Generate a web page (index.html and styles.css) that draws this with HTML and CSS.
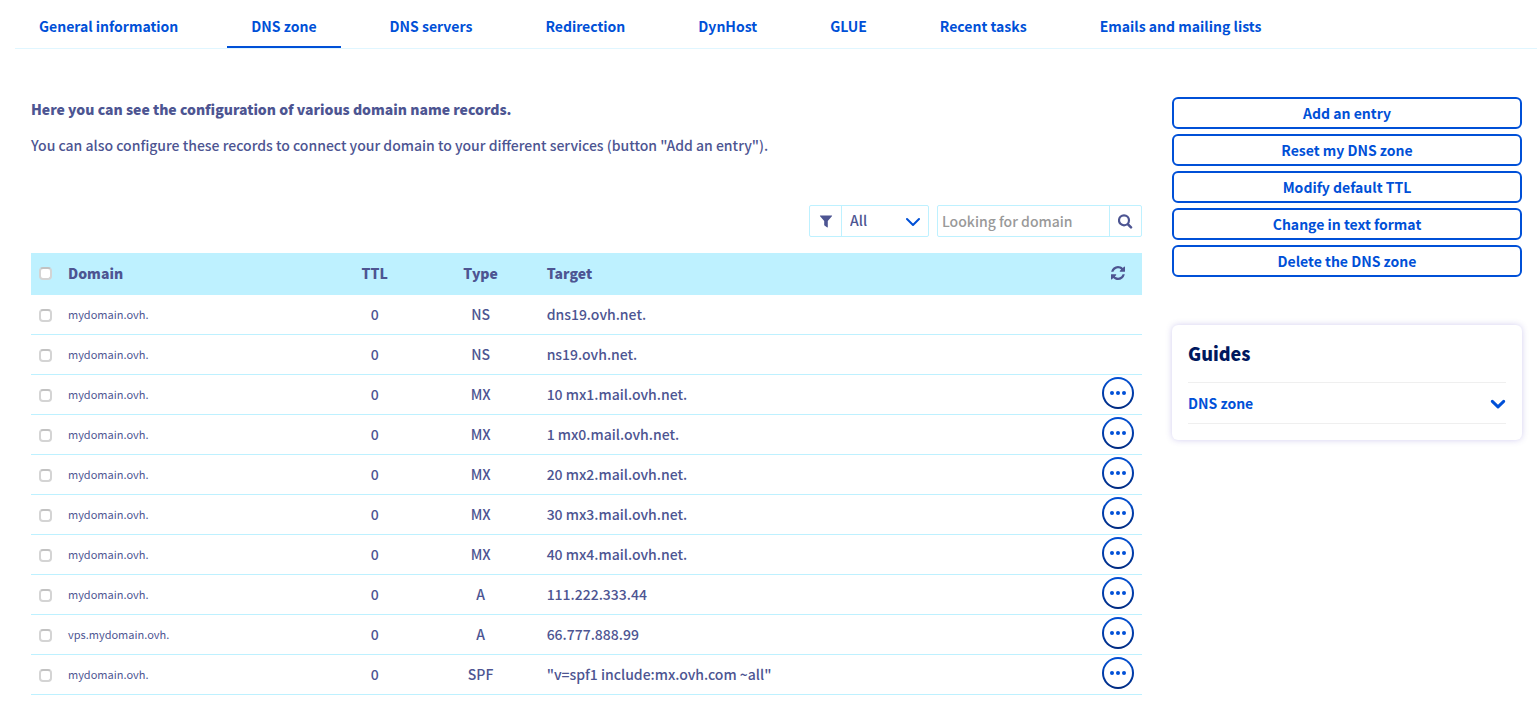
FILE: index.html
```html
<!DOCTYPE html>
<html lang="en">
<head>
<meta charset="utf-8">
<title>DNS zone</title>
<meta name="viewport" content="width=device-width, initial-scale=1">
<link rel="stylesheet" href="styles.css">
</head>
<body>
<nav class="tabs" aria-label="Domain sections">
  <a class="tab" href="#general">General information</a>
  <a class="tab tab-active" href="#zone" aria-current="page">DNS zone</a>
  <a class="tab" href="#servers">DNS servers</a>
  <a class="tab" href="#redirection">Redirection</a>
  <a class="tab" href="#dynhost">DynHost</a>
  <a class="tab" href="#glue">GLUE</a>
  <a class="tab" href="#tasks">Recent tasks</a>
  <a class="tab" href="#emails">Emails and mailing lists</a>
</nav>

<div class="layout">
  <main class="content">
    <p class="intro intro-strong">Here you can see the configuration of various domain name records.</p>
    <p class="intro">You can also configure these records to connect your domain to your different services (button "Add an entry").</p>

    <form class="filters">
      <div class="group">
        <label class="addon" for="type" aria-label="Filter by type">
          <svg width="14" height="14" viewBox="0 0 14 14" aria-hidden="true"><path fill="currentColor" d="M1.400 1.500h11.200c.5 0 .6.500.3.800L8.800 6.900V12.900c0 .5-.5.7-.9.400L5.500 11.500c-.2-.1-.3-.3-.3-.5V6.900L1.100 2.300c-.3-.3-.2-.8.300-.8z"/></svg>
        </label>
        <div class="picker">
          <select class="select" id="type"><option>All</option><option>A</option><option>MX</option><option>NS</option><option>SPF</option></select>
          <svg class="picker-arrow" width="14" height="10" viewBox="0 0 14 10" aria-hidden="true"><path fill="none" stroke="currentColor" stroke-width="2" stroke-linecap="round" stroke-linejoin="round" d="M1 2l6 6 6-6"/></svg>
        </div>
      </div>
      <div class="group">
        <input class="search" type="text" placeholder="Looking for domain" aria-label="Looking for domain">
        <button class="addon addon-end" type="button" aria-label="Search">
          <svg width="16" height="16" viewBox="0 0 16 16" aria-hidden="true"><circle cx="6" cy="7.300" r="5" fill="none" stroke="currentColor" stroke-width="2.200"/><path fill="none" stroke="currentColor" stroke-width="2.600" stroke-linecap="round" d="M10 11.300l3 3"/></svg>
        </button>
      </div>
    </form>

    <table class="records">
      <colgroup><col class="col-check"><col class="col-domain"><col class="col-ttl"><col class="col-type"><col><col class="col-action"></colgroup>
      <thead>
        <tr>
          <th><input class="check" type="checkbox" aria-label="Select all records"></th>
          <th>Domain</th><th class="center">TTL</th><th class="center">Type</th><th>Target</th>
          <th class="center"><button class="refresh" type="button" aria-label="Refresh"><svg width="14" height="14" viewBox="0 0 1536 1536" aria-hidden="true"><path fill="currentColor" d="M1511 928q0 5-1 7-64 268-268 434.500T764 1536q-146 0-282.500-55T238 1324l-129 129q-19 19-45 19t-45-19-19-45V960q0-26 19-45t45-19h448q26 0 45 19t19 45-19 45l-137 137q71 66 161 102t187 36q134 0 250-65t186-179q11-17 53-117 8-23 30-23h192q13 0 22.500 9.500t9.500 22.500zm25-800v448q0 26-19 45t-45 19h-448q-26 0-45-19t-19-45 19-45l138-138Q969 256 768 256q-134 0-250 65T332 500q-11 17-53 117-8 23-30 23H50q-13 0-22.500-9.500T18 608v-7q65-268 270-434.500T768 0q146 0 284 55.500T1297 212l130-129q19-19 45-19t45 19 19 45z"/></svg></button></th>
        </tr>
      </thead>
      <tbody id="rows">
      </tbody>
    </table>
  </main>

  <aside class="side">
    <div class="actions">
      <button class="action" type="button">Add an entry</button>
      <button class="action" type="button">Reset my DNS zone</button>
      <button class="action" type="button">Modify default TTL</button>
      <button class="action" type="button">Change in text format</button>
      <button class="action" type="button">Delete the DNS zone</button>
    </div>
    <section class="guides">
      <h2 class="guides-title">Guides</h2>
      <button class="guide" type="button" aria-expanded="false">
        <span>DNS zone</span>
        <svg width="16" height="12" viewBox="0 0 16 12" aria-hidden="true"><path fill="none" stroke="currentColor" stroke-width="3" stroke-linecap="round" stroke-linejoin="round" d="M2.300 4.300L8 9.800l5.700-5.500"/></svg>
      </button>
    </section>
  </aside>
</div>
<script src="records.js"></script>
</body>
</html>
```

FILE: records.js
```js
const records = [
  ['mydomain.ovh.', 'NS', 'dns19.ovh.net.', false],
  ['mydomain.ovh.', 'NS', 'ns19.ovh.net.', false],
  ['mydomain.ovh.', 'MX', '10 mx1.mail.ovh.net.', true],
  ['mydomain.ovh.', 'MX', '1 mx0.mail.ovh.net.', true],
  ['mydomain.ovh.', 'MX', '20 mx2.mail.ovh.net.', true],
  ['mydomain.ovh.', 'MX', '30 mx3.mail.ovh.net.', true],
  ['mydomain.ovh.', 'MX', '40 mx4.mail.ovh.net.', true],
  ['mydomain.ovh.', 'A', '111.222.333.44', true],
  ['vps.mydomain.ovh.', 'A', '66.777.888.99', true],
  ['mydomain.ovh.', 'SPF', '"v=spf1 include:mx.ovh.com ~all"', true]
];

const menuButton = `<button class="more" type="button" aria-label="Actions">
  <svg width="16" height="4" viewBox="0 0 16 4" aria-hidden="true"><g fill="currentColor"><circle cx="2" cy="2" r="2"/><circle cx="8" cy="2" r="2"/><circle cx="14" cy="2" r="2"/></g></svg>
</button>`;

document.getElementById('rows').innerHTML = records.map(([domain, type, target, editable]) => `
  <tr>
    <td><input class="check" type="checkbox" aria-label="Select ${domain} ${type}"></td>
    <td class="domain">${domain}</td>
    <td class="center">0</td>
    <td class="center">${type}</td>
    <td>${target}</td>
    <td class="menu-cell">${editable ? menuButton : ''}</td>
  </tr>`).join('');
```

FILE: styles.css
```css
* { box-sizing: border-box; }

body {
  margin: 0;
  background: #fff;
  color: #4d5592;
  font-family: "Noto Sans CJK SC", "Noto Sans", sans-serif;
  font-size: 14px;
  font-weight: 500;
  line-height: 20px;
}

button, input, select { font: inherit; color: inherit; }
button { cursor: pointer; }
svg { display: block; }

.tabs {
  display: flex;
  gap: 25px;
  margin-left: 15px;
  border-bottom: 1px solid #e0f6ff;
}

.tab {
  padding: 16px 24px 10px;
  border-bottom: 2px solid transparent;
  color: #0050d7;
  font-weight: 700;
  text-decoration: none;
  white-space: nowrap;
}
.tab-active { border-color: #0050d7; }

.layout {
  display: grid;
  grid-template-columns: minmax(0, 1fr) 350px;
  gap: 30px;
  padding: 48px 15px 16px 31px;
}

.intro { margin: 0 0 16px; }
.intro-strong { padding-top: 2px; font-weight: 900; }

.filters {
  display: flex;
  justify-content: flex-end;
  gap: 8px;
  margin: 50px 0 16px;
}

.group {
  display: flex;
  height: 32px;
  border: 1px solid #bef1ff;
  border-radius: 2px;
}

.addon {
  display: grid;
  place-items: center;
  width: 32px;
  border: 0;
  border-right: 1px solid #bef1ff;
  padding: 0;
  background: none;
}
.addon-end { border-right: 0; border-left: 1px solid #bef1ff; }

.picker { position: relative; display: flex; }
.select {
  width: 86px;
  padding: 0 8px 2px;
  border: 0;
  background: none;
  appearance: none;
}
.picker-arrow {
  position: absolute;
  top: 11px;
  right: 8px;
  color: #0050d7;
  pointer-events: none;
}

.search {
  width: 171px;
  padding: 0 4px;
  border: 0;
  background: none;
}
.search::placeholder { color: #999; opacity: 1; }

.records {
  width: 100%;
  border-collapse: separate;
  border-spacing: 0;
  table-layout: fixed;
}
.col-check { width: 29px; }
.col-domain { width: 24%; }
.col-ttl { width: 96px; }
.col-type { width: 116px; }
.col-action { width: 48px; }

.records th {
  height: 42px;
  padding: 0 8px 2px;
  background: #bef1ff;
  font-weight: 900;
  text-align: left;
}
.records td {
  height: 40px;
  padding: 0 8px 2px;
  border-bottom: 1px solid #bef1ff;
}
.records td:first-child { padding-top: 2px; padding-bottom: 0; }
.records .center { text-align: center; }
.records .domain { font-size: 11px; font-weight: 400; }
.records .menu-cell { padding-top: 2px; padding-bottom: 0; vertical-align: top; }

.check {
  display: block;
  width: 13px;
  height: 13px;
  margin: 0;
  border: 2px solid #d4d4d4;
  border-top-color: #c2c2c2;
  border-radius: 4px;
  background: #fff;
  appearance: none;
}
.check:checked { background: #0050d7; }

.refresh {
  display: block;
  margin: 0 auto;
  padding: 0;
  border: 0;
  background: none;
}

.more {
  display: grid;
  place-items: center;
  width: 32px;
  height: 32px;
  padding: 0;
  border: 2px solid transparent;
  border-radius: 50%;
  background:
    linear-gradient(#fff, #fff) padding-box,
    linear-gradient(#0050d7, #002a80) border-box;
  color: #0050d7;
}

.actions { display: grid; gap: 5px; }
.action {
  height: 32px;
  padding: 0 16px;
  border: 2px solid #0050d7;
  border-radius: 6px;
  background: #fff;
  color: #0050d7;
  font-weight: 700;
}

.guides {
  margin-top: 48px;
  padding: 16px;
  border-radius: 6px;
  box-shadow: 0 0 6px rgba(77, 60, 190, 0.25);
}
.guides-title {
  margin: 0;
  padding-bottom: 16px;
  border-bottom: 1px solid #efefef;
  color: #00185e;
  font-size: 18px;
  font-weight: 900;
  line-height: 25px;
}
.guide {
  display: flex;
  align-items: center;
  justify-content: space-between;
  width: 100%;
  height: 41px;
  padding: 0;
  border: 0;
  border-bottom: 1px solid #efefef;
  background: none;
  color: #0050d7;
  font-weight: 700;
}
```
